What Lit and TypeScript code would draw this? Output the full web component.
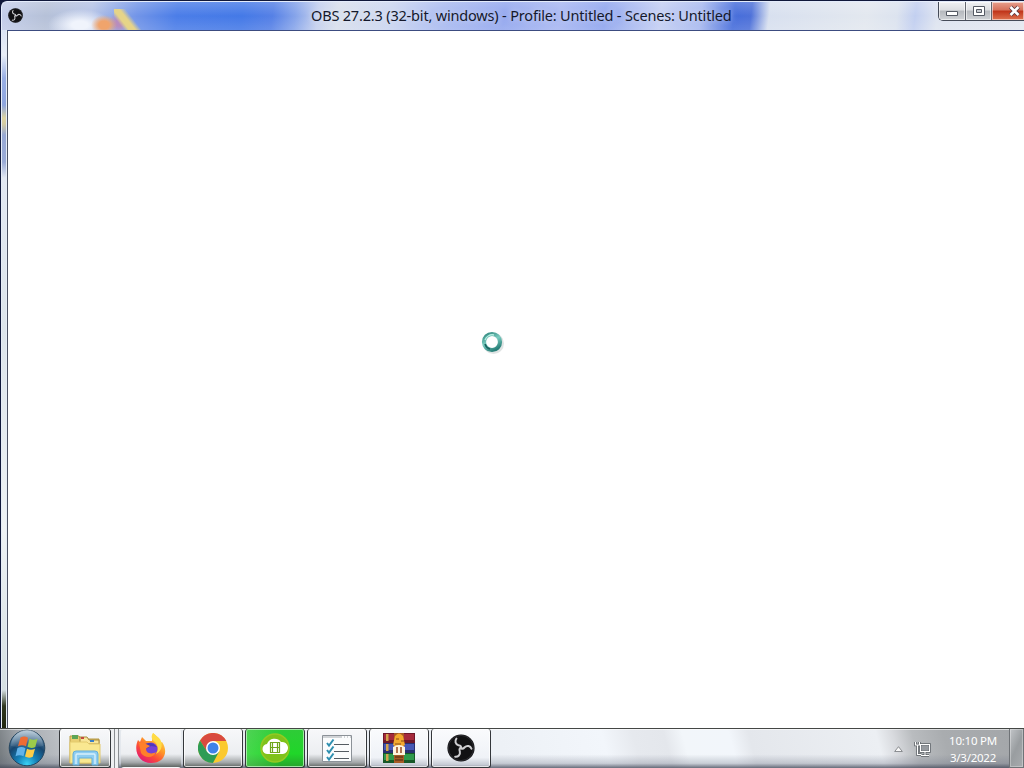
import {LitElement, css, html, svg} from 'lit';
import {customElement, property} from 'lit/decorators.js';

const obsIcon = (size: number) => html`
  <svg width=${size} height=${size} viewBox="0 0 28 28">
    <circle cx="14" cy="14" r="13.6" fill="#111113"></circle>
    <circle cx="14" cy="14" r="12.6" fill="none" stroke="#343438" stroke-width="0.8"></circle>
    ${[0, 120, 240].map(angle => svg`
      <path transform="rotate(${angle} 14 14)" fill="none" stroke="#cfcfd2" stroke-width="2" stroke-linecap="round"
        d="M14 14.5C14.6 12.200 13.500 11.600 11.500 11.200C8.300 10.200 7.600 7 9.400 4.600"></path>
    `)}
  </svg>
`;

const explorerIcon = html`
  <svg class="explorer" width="34" height="32" viewBox="0 0 34 32">
    <path d="M2 2h9l2 3h18v24H2z" fill="#e9cf72" stroke="#b79a45"></path>
    <path d="M4 1h6v4H4z" fill="#5da556"></path>
    <path d="M12 3h7l2 3h10v4H12z" fill="#f8e69a" stroke="#a88b3f"></path>
    <path d="M13 3h3v2h-3z" fill="#c44b3f"></path>
    <path d="M22 6h4v2h-4z" fill="#3c7fc4"></path>
    <path d="M2 8h17l2 2h11v19H2z" fill="#f9e891" stroke="#e3ca6c"></path>
    <path d="M5 31V20q0-3 3-3h19q3 0 3 3v11h-6v-7H11v7z" fill="#8ecdf0" stroke="#63aedb"></path>
    <path d="M8 30V21q0-1 1-1h17q1 0 1 1v9" fill="none" stroke="#d6f0fc" stroke-width="1.4"></path>
  </svg>
`;

const firefoxIcon = html`
  <svg width="32" height="32" viewBox="0 0 32 32">
    <defs>
      <linearGradient id="fox" x1="0.85" y1="0.1" x2="0.25" y2="0.95">
        <stop offset="0" stop-color="#ffe24a"></stop>
        <stop offset="0.38" stop-color="#ff9a27"></stop>
        <stop offset="0.7" stop-color="#fb4a39"></stop>
        <stop offset="1" stop-color="#e31c73"></stop>
      </linearGradient>
    </defs>
    <path d="M3 8l2 2 2-5 4 4 6 0 1-8c4 3 6 6 7 10l2-1c7 10 2 21-11 21C4 31-2 19 3 8z" fill="url(#fox)"></path>
    <path d="M18 1c-2 3-2 6 2 9 4 4 3 9 1 12 7-3 7-12 3-16-2-2-4-3-6-5z" fill="#ffdb45"></path>
    <circle cx="16" cy="17" r="6.500" fill="#7542d5"></circle>
    <path d="M10 12c4-2 9-1 12 3l-6-1-3 2-3 1z" fill="#4d3ab8"></path>
    <path d="M4 11c3-2 6 0 7 1l4 2c0 1-3 1-4 3 0 4 5 6 10 3-2 6-11 7-15 1z" fill="#ff802b"></path>
  </svg>
`;

const chromeIcon = html`
  <svg width="30" height="30" viewBox="0 0 30 30">
    <circle cx="15" cy="15" r="15" fill="#fbc92f"></circle>
    <path d="M15 8h13.300A15 15 0 0 0 2 7.500l6.900 11z" fill="#d94a3f"></path>
    <path d="M2 7.500A15 15 0 0 0 15 30l6.100-11.500L9 18.500z" fill="#2e9c55"></path>
    <circle cx="15" cy="15" r="7" fill="#fff"></circle>
    <circle cx="15" cy="15" r="5.500" fill="#3f83ea"></circle>
  </svg>
`;

const cloudIcon = html`
  <svg width="30" height="30" viewBox="0 0 30 30">
    <circle cx="15" cy="15" r="14" fill="#7fc21b" stroke="#94c922" stroke-width="1.500"></circle>
    <path d="M8 21a5 5 0 0 1-1-10 8 8 0 0 1 14-2 6 6 0 0 1 2 12z" fill="#fff"></path>
    <path d="M10.500 9.500h9v10h-9zM10.500 14.500h9M12.500 9.500v10M17.500 9.500v10" fill="none" stroke="#6fa51c" stroke-width="1.200"></path>
  </svg>
`;

const checklistIcon = html`
  <svg width="30" height="27" viewBox="0 0 30 27">
    <path d="M0.500 0.500h29v26h-29z" fill="#fbfcfd" stroke="#8c9298"></path>
    <path d="M1 2h28" stroke="#a6abb0" stroke-dasharray="19 2 1 2 1 2 1"></path>
    <path d="M12 9.500h15M12 16.500h15M12 23.500h15" stroke="#555c63"></path>
    <path d="M5 8l2 2.500 4.500-6M5 15l2 2.500 4.500-6M5 22l2 2.500 4.500-6" fill="none" stroke="#2d8fb0" stroke-width="2"></path>
  </svg>
`;

const archiveIcon = html`
  <svg width="32" height="30" viewBox="0 0 32 30">
    ${[['#a52a3c', '#6e1828'], ['#4557b5', '#28306f'], ['#2f9a4c', '#175828']].map(([cover, edge], i) => svg`
      <g transform="translate(0 ${i * 10})">
        <path d="M0 0h32v10H0z" fill=${edge}></path>
        <path d="M1 1h30v6H1z" fill=${cover}></path>
        <path d="M3 1h2.500v7H3z" fill="#d3a44d"></path>
      </g>
    `)}
    <path d="M11 0h10v30H11z" fill="#a75b25"></path>
    <path d="M12 3q4-5 8 0l2 9-6 3-6-3z" fill="#f3a92e"></path>
    <path d="M13 6h3M18 8h3M12 11h6" stroke="#8b4a17"></path>
    <path d="M10 14q6-4 12 0v8H10z" fill="#fff5de"></path>
    <path d="M14 14v6M18 14v6" fill="none" stroke="#9b4a21" stroke-width="1.500"></path>
    <path d="M12 24h8M12 27h8" stroke="#6b3a18" stroke-width="1.500"></path>
  </svg>
`;

const startIcon = html`
  <svg width="38" height="38" viewBox="0 0 38 38">
    <defs>
      <radialGradient id="orb" cx="0.5" cy="0.95" r="0.95">
        <stop offset="0" stop-color="#3bd2f4"></stop>
        <stop offset="0.3" stop-color="#1580b8"></stop>
        <stop offset="0.62" stop-color="#17466f"></stop>
        <stop offset="1" stop-color="#7398b3"></stop>
      </radialGradient>
      <linearGradient id="shine" x1="0" y1="0" x2="0" y2="1">
        <stop offset="0" stop-color="#fff" stop-opacity="0.550"></stop>
        <stop offset="1" stop-color="#fff" stop-opacity="0.050"></stop>
      </linearGradient>
    </defs>
    <circle cx="19" cy="19" r="17.800" fill="url(#orb)" stroke="#24455f"></circle>
    <path d="M3 17a16 16 0 0 1 32 0q-16 4-32 0z" fill="url(#shine)"></path>
    <path d="M12.500 8.500q4-2 7.500 0.300l-2 8.500q-4-2-8 0z" fill="#ee6c33"></path>
    <path d="M21.500 9.800q4 2 8 0l-2.200 8.200q-4 2-7.800-0.200z" fill="#9ccc4a"></path>
    <path d="M9.500 19q4-2 8 0.200l-2 8q-4-2-8 0z" fill="#62b3ea"></path>
    <path d="M19 19.800q4 2 8 0l-2.200 8q-4 2-7.800-0.200z" fill="#fccc48"></path>
  </svg>
`;

@customElement('task-button')
export class TaskButton extends LitElement {
  static styles = css`
    :host {
      box-sizing: border-box;
      display: flex;
      align-items: center;
      justify-content: center;
      inline-size: 60px;
      block-size: 39px;
      border: 1px solid #34373b;
      border-block-start: none;
      border-radius: 3px;
      background: linear-gradient(#f7f8fa 0, #eceef1 66%, #a3a7a9 88%, #5f6562 100%);
      box-shadow: inset 0 0 0 1px rgb(255 255 255 / 75%);
    }

    :host([kind='stacked']) {
      inline-size: 52px;
    }

    :host([kind='plain']) {
      border-color: transparent;
      box-shadow: none;
    }

    :host([kind='progress']) {
      background: linear-gradient(90deg, rgb(140 225 140 / 35%), transparent 60%), linear-gradient(#2fcb38, #20d629 65%, #27a42c);
      box-shadow: inset 0 0 0 1px rgb(190 245 190 / 80%);
    }

    :host([kind='bright']) {
      background: linear-gradient(#fafbfd, #eff2f7 75%, #c3c8d2 95%, #858b96);
    }
  `;

  @property({reflect: true})
  kind: string = '';

  render() {
    return html`<slot></slot>`;
  }
}

@customElement('app-root')
export class AppRoot extends LitElement {
  static styles = css`
    :host {
      display: flex;
      flex-direction: column;
      inline-size: 1024px;
      block-size: 768px;
      overflow: hidden;
      background-color: #10183a;
      font-family: 'Noto Sans', 'Open Sans', sans-serif;
    }

    * {
      box-sizing: border-box;
    }

    svg {
      display: block;
      flex: none;
    }

    .window {
      display: flex;
      flex-direction: column;
      block-size: 728px;
      padding-block-start: 1px;
      padding-inline-start: 1px;
    }

    .titlebar {
      display: grid;
      grid-template-columns: 300px 1fr 86px;
      block-size: 29px;
      border-block-start: 1px solid #e4ecfb;
      border-inline-start: 1px solid #e4ecfb;
      border-start-start-radius: 6px;
      background:
        radial-gradient(ellipse 13px 10px at 102px 23px, #f0a46c 40%, transparent),
        linear-gradient(52deg, transparent 8px, #e6d488 12px 17px, transparent 22px) 112px 7px / 28px 21px no-repeat,
        radial-gradient(ellipse 11px 11px at 117px 21px, #b88dbe 30%, transparent),
        radial-gradient(ellipse 32px 16px at 78px 23px, #f0f4fc 25%, transparent),
        linear-gradient(rgb(255 255 255 / 18%), transparent 50%, rgb(255 255 255 / 12%)),
        linear-gradient(97deg, #c3cdea 0, #b6c1d8 45px, #b5c3e6 90px, #7295e8 135px, #4b7de8 175px, #4479e7 240px, #5580e6 270px, #86a4ea 293px, #c3cfee 315px, #d8dfec 335px, #cbd6f0 385px, #a9baf0 440px, #93a7ee 500px, #a8b7f2 555px, #8fa5ee 600px, #c3cef3 655px, #a8b9ef 695px, #466ddb 728px, #4e71d9 745px, #d8e0ef 763px, #e3e8ef 860px, #dce3ef 890px, #c2cff0 908px, #dee4f0 930px, #e4e8f0 100%);
    }

    .app-icon {
      padding: 6px 0 0 6px;
    }

    .title {
      justify-self: start;
      padding-inline-start: 9px;
      font-size: 14.5px;
      line-height: 26px;
      letter-spacing: -0.18px;
      white-space: nowrap;
      color: #14182b;
      text-shadow: 0 0 6px rgb(255 255 255 / 70%);
    }

    .controls {
      display: flex;
      block-size: 19px;
      border: 1px solid #454b58;
      border-block-start: none;
      border-inline-end: none;
      border-end-start-radius: 5px;
      overflow: hidden;
    }

    .control {
      display: flex;
      align-items: center;
      justify-content: center;
      inline-size: 27px;
      border-inline-end: 1px solid #63676f;
      background: linear-gradient(#f0f1f3 0, #dcdee1 45%, #b5b8bd 50%, #cfd2d6 100%);
      box-shadow: inset 0 0 0 1px rgb(255 255 255 / 55%);
    }

    .control.zoom {
      inline-size: 26px;
    }

    .control.close {
      flex: 1;
      justify-content: end;
      padding-inline-end: 3px;
      border: none;
      background: linear-gradient(#e7a08e 0, #d6705a 45%, #bf3318 50%, #df7350 100%);
    }

    .frame {
      display: flex;
      flex: 1;
    }

    .edge {
      inline-size: 6px;
      border-inline: 1px solid #e5ecf6;
      background: linear-gradient(#dbe3f4 0, #e9eef7 25px, #98aee4 48px, #8ea5de 75px, #ddd4a2 88px, #d4cca4 94px, #97a8d4 105px, #9aabd6 132px, #e2e8f2 148px, #dce4ea 300px, #eef2f4 500px, #d5dfe2 660px, #303820 676px, #20260f 100%);
    }

    .client {
      flex: 1;
      display: grid;
      place-items: center;
      border-block-start: 1px solid #3c4c80;
      border-inline-start: 1px solid #4a5061;
      background-color: #fff;
    }

    .busy {
      margin: 0 46px 76px 0;
    }

    .taskbar {
      display: flex;
      block-size: 40px;
      border-block-start: 1px solid #444745;
      background:
        linear-gradient(transparent 65%, rgb(105 112 130 / 30%) 88%, rgb(70 76 92 / 80%) 100%),
        linear-gradient(75deg, #70767a 0, #a6abb0 30px, #b8bcc1 60px, #e4e8ed 115px, #edf1f6 490px, #f2f6fb 590px, #e6e9ee 620px, #e4e7ec 650px, #f2f6fa 668px, #f2f6fb 713px, #e4e7ec 732px, #eceff3 855px, #d8dade 871px, #b9bcbf 890px, #a9acaf 920px, #a3a6a9 100%);
      box-shadow: inset 0 1px 0 rgb(255 255 255 / 60%);
    }

    .start {
      inline-size: 59px;
      padding-inline-start: 8px;
    }

    .tasks {
      display: flex;
      gap: 2px;
    }

    .explorer {
      margin-block-start: 3px;
    }

    .stack {
      display: flex;
      inline-size: 60px;
    }

    .sheet {
      inline-size: 4px;
      border-inline-end: 1px solid #8a8e92;
      background-color: #eef0f2;
    }

    .tray {
      display: flex;
      align-items: center;
      margin-inline-start: auto;
    }

    .network {
      margin-inline-start: 11px;
    }

    .clock {
      inline-size: 78px;
      padding-block-start: 1px;
      padding-inline-start: 6px;
      font-size: 11.5px;
      line-height: 17px;
      letter-spacing: -0.25px;
      text-align: center;
      color: #fff;
    }

    .desktop {
      align-self: stretch;
      inline-size: 15px;
      border: 1px solid #6f7377;
      border-block-start: none;
      background: linear-gradient(115deg, #c2c5c8, #999da0 50%, #a8abae);
      box-shadow: inset 0 0 0 1px rgb(255 255 255 / 30%);
    }
  `;

  render() {
    return html`
      <div class="window">
        <div class="titlebar">
          <div class="app-icon">${obsIcon(15)}</div>
          <div class="title">OBS 27.2.3 (32-bit, windows) - Profile: Untitled - Scenes: Untitled</div>
          <div class="controls">
            <div class="control">
              <svg width="14" height="15" viewBox="0 0 14 15"><path d="M1.500 7.500h11v4h-11z" fill="#fff" stroke="#555a64"></path></svg>
            </div>
            <div class="control zoom">
              <svg width="12" height="13" viewBox="0 0 12 13">
                <path d="M0.500 1.500h11v9h-11z" fill="#fff" stroke="#555a64"></path>
                <path d="M3.500 4.500h5v3h-5z" fill="#c9ccd1" stroke="#555a64"></path>
              </svg>
            </div>
            <div class="control close">
              <svg width="13" height="12" viewBox="0 0 13 12">
                <path d="M2.500 2l8 8M10.500 2l-8 8" stroke="#5b3a40" stroke-width="4.200"></path>
                <path d="M2.500 2l8 8M10.500 2l-8 8" stroke="#fff" stroke-width="2.600"></path>
              </svg>
            </div>
          </div>
        </div>
        <div class="frame">
          <div class="edge"></div>
          <div class="client">
            <svg class="busy" width="26" height="24" viewBox="0 0 26 24">
              <defs>
                <linearGradient id="ring" x1="0.2" y1="0" x2="0.7" y2="1">
                  <stop offset="0" stop-color="#3d9389"></stop>
                  <stop offset="0.45" stop-color="#7accc0"></stop>
                  <stop offset="1" stop-color="#277f78"></stop>
                </linearGradient>
              </defs>
              <circle cx="13.500" cy="13.500" r="8.500" fill="none" stroke="#c9d0d0" stroke-width="4" opacity="0.600"></circle>
              <circle cx="12" cy="12" r="8" fill="#fff" stroke="url(#ring)" stroke-width="4.200"></circle>
              <path d="M5 10a7.500 7.500 0 0 1 9-5" fill="none" stroke="#b5eee2" stroke-width="1.300"></path>
              <path d="M5 14a7.500 7.500 0 0 0 5 5" fill="none" stroke="#18635f" stroke-width="1.500"></path>
            </svg>
          </div>
        </div>
      </div>
      <div class="taskbar">
        <div class="start">${startIcon}</div>
        <div class="tasks">
          <div class="stack">
            <task-button kind="stacked">${explorerIcon}</task-button>
            <div class="sheet"></div>
            <div class="sheet"></div>
          </div>
          <task-button kind="plain">${firefoxIcon}</task-button>
          <task-button>${chromeIcon}</task-button>
          <task-button kind="progress">${cloudIcon}</task-button>
          <task-button>${checklistIcon}</task-button>
          <task-button kind="bright">${archiveIcon}</task-button>
          <task-button kind="bright">${obsIcon(28)}</task-button>
        </div>
        <div class="tray">
          <svg width="9" height="6" viewBox="0 0 9 6"><path d="M4.500 0.700L8.300 5.500H0.700z" fill="#f8f8f8" stroke="#65696d" stroke-width="0.700"></path></svg>
          <svg class="network" width="17" height="16" viewBox="0 0 17 16">
            <path d="M6.500 3.500h9v7h-9zM11 11v3M7 14.500h8M1.500 1v3h4V1M3.500 4v9.500h4" fill="none" stroke="#5c6166" stroke-width="2.600"></path>
            <path d="M6.500 3.500h9v7h-9zM11 11v3M7 14.500h8M1.500 1v3h4V1M3.500 4v9.500h4" fill="none" stroke="#fff" stroke-width="1.100"></path>
            <path d="M7.500 4.500h7v5h-7z" fill="#979ba0"></path>
          </svg>
          <div class="clock">
            <div>10:10 PM</div>
            <div>3/3/2022</div>
          </div>
          <div class="desktop"></div>
        </div>
      </div>
    `;
  }
}

declare global {
  interface HTMLElementTagNameMap {
    'app-root': AppRoot;
    'task-button': TaskButton;
  }
}
